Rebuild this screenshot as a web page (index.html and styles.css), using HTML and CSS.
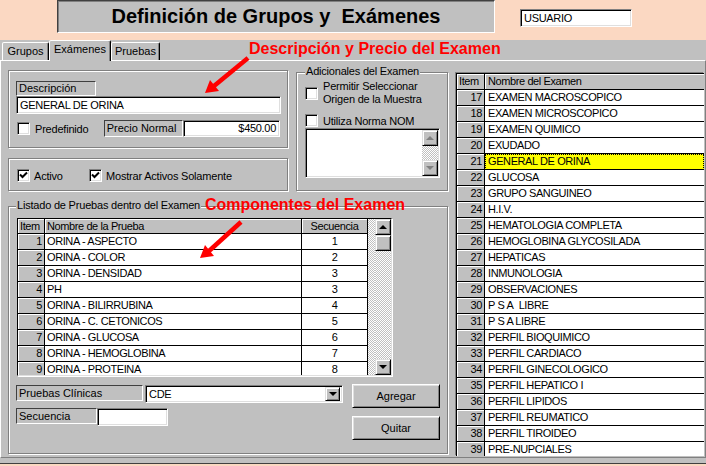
FILE: index.html
```html
<!DOCTYPE html>
<html lang="es">
  <head>
    <meta charset="UTF-8" />
    <meta name="viewport" content="width=device-width, initial-scale=1.0" />
    <title>Definición de Grupos y Exámenes</title>
    <link rel="stylesheet" href="styles.css">
  </head>
  <body>
    <div class="screen">
      <div class="top">
        <div class="title">Definición de Grupos y&nbsp; Exámenes</div>
        <div class="field user">USUARIO</div>
      </div>

      <div class="window">
        <div class="tabs">
          <div class="tab tab-grupos">Grupos</div>
          <div class="tab tab-examenes active">Exámenes</div>
          <div class="tab tab-pruebas">Pruebas</div>
        </div>

        <div class="page">
          <div class="left">
            <div class="upper">
              <div class="col">
                <!-- Descripcion y precio -->
                <div class="group g-desc">
                  <div class="lbl lbl-desc">Descripción</div>
                  <div class="field desc-input">GENERAL DE ORINA</div>
                  <div class="price-row">
                    <div class="chk chk-pred"><span class="box"></span>Predefinido</div>
                    <div class="lbl lbl-precio">Precio Normal</div>
                    <div class="field precio">$450.00</div>
                  </div>
                </div>

                <div class="group g-activo">
                  <div class="chk chk-activo">
                    <span class="box"><svg width="9" height="9" viewBox="0 0 9 9"><polyline points="1,3.5 3.5,6 8,1.5" fill="none" stroke="#000" stroke-width="2"/></svg></span>Activo
                  </div>
                  <div class="chk">
                    <span class="box"><svg width="9" height="9" viewBox="0 0 9 9"><polyline points="1,3.5 3.5,6 8,1.5" fill="none" stroke="#000" stroke-width="2"/></svg></span>Mostrar Activos Solamente
                  </div>
                </div>
              </div>

              <!-- Adicionales -->
              <div class="group g-adic">
                <span class="legend">Adicionales del Examen</span>
                <div class="chk chk-origen"><span class="box"></span><span>Permitir Seleccionar<br>Origen de la Muestra</span></div>
                <div class="chk chk-nom"><span class="box"></span>Utiliza Norma NOM</div>
                <div class="field memo">
                  <div class="vscroll disabled">
                    <div class="sb-btn up"></div>
                    <div class="sb-track"></div>
                    <div class="sb-btn down"></div>
                  </div>
                </div>
              </div>
            </div>

            <!-- Listado de pruebas -->
            <div class="group g-list">
              <span class="legend">Listado de Pruebas dentro del Examen</span>
              <div class="tgrid">
                <div class="tgrid-body">
                  <div class="trow thead"><div class="c-item">Item</div><div class="c-name">Nombre de la Prueba</div><div class="c-seq">Secuencia</div></div>
                  <div class="trow"><div class="c-item num">1</div><div class="c-name">ORINA - ASPECTO</div><div class="c-seq">1</div></div>
                  <div class="trow"><div class="c-item num">2</div><div class="c-name">ORINA - COLOR</div><div class="c-seq">2</div></div>
                  <div class="trow"><div class="c-item num">3</div><div class="c-name">ORINA - DENSIDAD</div><div class="c-seq">3</div></div>
                  <div class="trow"><div class="c-item num">4</div><div class="c-name">PH</div><div class="c-seq">3</div></div>
                  <div class="trow"><div class="c-item num">5</div><div class="c-name">ORINA - BILIRRUBINA</div><div class="c-seq">4</div></div>
                  <div class="trow"><div class="c-item num">6</div><div class="c-name">ORINA - C. CETONICOS</div><div class="c-seq">5</div></div>
                  <div class="trow"><div class="c-item num">7</div><div class="c-name">ORINA - GLUCOSA</div><div class="c-seq">6</div></div>
                  <div class="trow"><div class="c-item num">8</div><div class="c-name">ORINA - HEMOGLOBINA</div><div class="c-seq">7</div></div>
                  <div class="trow"><div class="c-item num">9</div><div class="c-name">ORINA - PROTEINA</div><div class="c-seq">8</div></div>
                </div>
                <div class="vscroll">
                  <div class="sb-btn up"></div>
                  <div class="sb-btn thumb"></div>
                  <div class="sb-track"></div>
                  <div class="sb-btn down"></div>
                </div>
              </div>

              <div class="controls">
                <div class="ctl-left">
                  <div class="ctl-row">
                    <div class="lbl lbl-pruebas">Pruebas Clínicas</div>
                    <div class="field combo">CDE<span class="sb-btn down combo-btn"></span></div>
                  </div>
                  <div class="ctl-row ctl-row2">
                    <div class="lbl lbl-sec">Secuencia</div>
                    <div class="field sec-input"></div>
                  </div>
                </div>
                <div class="ctl-right">
                  <div class="btn">Agregar</div>
                  <div class="btn">Quitar</div>
                </div>
              </div>
            </div>
          </div>

          <!-- Lista de examenes -->
          <div class="rgrid">
            <div class="rrow thead"><div class="r-item">Item</div><div class="r-name">Nombre del Examen</div></div>
            <div class="rrow"><div class="r-item num">17</div><div class="r-name">EXAMEN MACROSCOPICO</div></div>
            <div class="rrow"><div class="r-item num">18</div><div class="r-name">EXAMEN MICROSCOPICO</div></div>
            <div class="rrow"><div class="r-item num">19</div><div class="r-name">EXAMEN QUIMICO</div></div>
            <div class="rrow"><div class="r-item num">20</div><div class="r-name">EXUDADO</div></div>
            <div class="rrow selected"><div class="r-item num">21</div><div class="r-name">GENERAL DE ORINA</div></div>
            <div class="rrow"><div class="r-item num">22</div><div class="r-name">GLUCOSA</div></div>
            <div class="rrow"><div class="r-item num">23</div><div class="r-name">GRUPO SANGUINEO</div></div>
            <div class="rrow"><div class="r-item num">24</div><div class="r-name">H.I.V.</div></div>
            <div class="rrow"><div class="r-item num">25</div><div class="r-name">HEMATOLOGIA COMPLETA</div></div>
            <div class="rrow"><div class="r-item num">26</div><div class="r-name">HEMOGLOBINA GLYCOSILADA</div></div>
            <div class="rrow"><div class="r-item num">27</div><div class="r-name">HEPATICAS</div></div>
            <div class="rrow"><div class="r-item num">28</div><div class="r-name">INMUNOLOGIA</div></div>
            <div class="rrow"><div class="r-item num">29</div><div class="r-name">OBSERVACIONES</div></div>
            <div class="rrow"><div class="r-item num">30</div><div class="r-name">P S A&nbsp; LIBRE</div></div>
            <div class="rrow"><div class="r-item num">31</div><div class="r-name">P S A LIBRE</div></div>
            <div class="rrow"><div class="r-item num">32</div><div class="r-name">PERFIL BIOQUIMICO</div></div>
            <div class="rrow"><div class="r-item num">33</div><div class="r-name">PERFIL CARDIACO</div></div>
            <div class="rrow"><div class="r-item num">34</div><div class="r-name">PERFIL GINECOLOGICO</div></div>
            <div class="rrow"><div class="r-item num">35</div><div class="r-name">PERFIL HEPATICO I</div></div>
            <div class="rrow"><div class="r-item num">36</div><div class="r-name">PERFIL LIPIDOS</div></div>
            <div class="rrow"><div class="r-item num">37</div><div class="r-name">PERFIL REUMATICO</div></div>
            <div class="rrow"><div class="r-item num">38</div><div class="r-name">PERFIL TIROIDEO</div></div>
            <div class="rrow"><div class="r-item num">39</div><div class="r-name">PRE-NUPCIALES</div></div>
          </div>
        </div>
      </div>

      <!-- Anotaciones -->
      <div class="note note-desc">Descripción y Precio del Examen</div>
      <div class="note note-comp">Componentes del Examen</div>
      <svg class="arrows" width="706" height="466" viewBox="0 0 706 466">
        <line x1="248" y1="58" x2="214" y2="86" stroke="#f00" stroke-width="4.5" />
        <polygon points="205,93 219,91 210,80" fill="#f00" />
        <line x1="241" y1="222" x2="209" y2="251" stroke="#f00" stroke-width="4.5" />
        <polygon points="200,258 214,256 205,245" fill="#f00" />
      </svg>
    </div>
  </body>
</html>
```

FILE: styles.css
```css
body {
  margin: 0;
  font-family: "Liberation Sans", Arial, sans-serif;
  font-size: 11px;
  color: #000;
}

.screen {
  position: relative;
  width: 706px;
  height: 466px;
  overflow: hidden;
  background-color: #fbd8c2;
}

/* Header */
.top {
  display: flex;
  align-items: flex-start;
  height: 40px;
}

.title {
  box-sizing: border-box;
  width: 438px;
  height: 33px;
  margin-left: 57px;
  background-color: #c0c0c0;
  border: 1px solid;
  border-color: #404040 #fff #fff #404040;
  box-shadow: inset 1px 1px #808080;
  font-size: 20px;
  font-weight: bold;
  line-height: 30px;
  text-align: center;
}

.field {
  box-sizing: border-box;
  background-color: #fff;
  border: 1px solid;
  border-color: #808080 #fff #fff #808080;
  box-shadow: inset 1px 1px #000, inset -1px -1px #dfdfdf;
  white-space: nowrap;
  overflow: hidden;
}

.user {
  width: 112px;
  height: 18px;
  margin: 9px 0 0 25px;
  padding: 0 3px;
  line-height: 16px;
  letter-spacing: -0.3px;
}

/* Window and tabs */
.window {
  height: 423px;
  background-color: #c0c0c0;
  border-bottom: 1px solid #404040;
}

.tabs {
  display: flex;
  align-items: flex-end;
  height: 20px;
  padding-left: 2px;
}

.tab {
  box-sizing: border-box;
  height: 18px;
  padding-top: 2px;
  text-align: center;
  background-color: #c0c0c0;
  border: 1px solid;
  border-bottom: none;
  border-color: #fff #000 transparent #fff;
  border-radius: 2px 2px 0 0;
  box-shadow: inset -1px 0 #808080;
}

.tab-grupos { width: 47px; }
.tab-examenes { width: 62px; }
.tab-pruebas { width: 49px; }

.tab.active {
  position: relative;
  z-index: 1;
  height: 21px;
  margin-bottom: -1px;
}

.page {
  box-sizing: border-box;
  display: flex;
  align-items: flex-start;
  height: 398px;
  border: 1px solid;
  border-color: #fff #808080 #808080 #fff;
}

.left {
  width: 440px;
  margin: 9px 0 0 7px;
}

.upper {
  display: flex;
  align-items: flex-start;
}

.col {
  display: flex;
  flex-direction: column;
  gap: 10px;
  width: 280px;
}

/* Group boxes */
.group {
  position: relative;
  box-sizing: border-box;
  border: 1px solid #808080;
  box-shadow: inset 1px 1px #fff, 1px 1px #fff;
}

.legend {
  position: absolute;
  top: -8px;
  left: 8px;
  padding: 0 1px;
  line-height: 13px;
  letter-spacing: -0.2px;
  background-color: #c0c0c0;
  white-space: nowrap;
}

.g-list .legend {
  left: 7px;
}

.g-desc {
  height: 78px;
  padding: 10px 7px 0;
}

.lbl {
  box-sizing: border-box;
  height: 15px;
  padding: 0 2px;
  border: 1px solid;
  border-color: #404040 #fff #fff #404040;
  line-height: 13px;
  white-space: nowrap;
}

.lbl-desc { width: 80px; }

.desc-input {
  width: 265px;
  height: 18px;
  padding: 0 3px;
  line-height: 16px;
  letter-spacing: -0.3px;
}

.price-row {
  display: flex;
  align-items: center;
  height: 17px;
  margin-top: 6px;
}

.chk {
  display: flex;
  align-items: center;
  white-space: nowrap;
  letter-spacing: -0.2px;
}

.box {
  box-sizing: border-box;
  display: flex;
  align-items: center;
  justify-content: center;
  flex: none;
  width: 13px;
  height: 13px;
  margin-right: 5px;
  background-color: #fff;
  border: 1px solid;
  border-color: #808080 #fff #fff #808080;
  box-shadow: inset 1px 1px #000, inset -1px -1px #dfdfdf;
}

.chk-pred {
  width: 87px;
  padding-left: 1px;
}

.lbl-precio {
  width: 80px;
  height: 17px;
  line-height: 15px;
}

.precio {
  width: 97px;
  height: 17px;
  padding: 0 3px;
  line-height: 15px;
  text-align: right;
  letter-spacing: -0.3px;
}

.g-activo {
  display: flex;
  align-items: flex-start;
  height: 33px;
  padding: 10px 0 0 8px;
}

.g-activo .chk {
  height: 13px;
}

.g-activo .box {
  margin-right: 4px;
}

.chk-activo {
  width: 72px;
}

.g-adic {
  width: 152px;
  height: 119px;
  margin: 2px 0 0 8px;
  padding: 7px 0 0 8px;
}

.chk-origen {
  line-height: 13px;
}

.chk-nom {
  height: 13px;
  margin-top: 8px;
}

.memo {
  display: flex;
  justify-content: flex-end;
  width: 135px;
  height: 50px;
  margin-top: 1px;
  padding: 1px;
}

/* Scrollbars */
.vscroll {
  display: flex;
  flex-direction: column;
  flex: none;
  width: 16px;
}

.sb-track {
  flex: 1;
  background-image: repeating-conic-gradient(#c0c0c0 0 25%, #fff 0 50%);
  background-size: 2px 2px;
}

.sb-btn {
  box-sizing: border-box;
  display: flex;
  align-items: center;
  justify-content: center;
  flex: none;
  width: 16px;
  height: 16px;
  background-color: #c0c0c0;
  border: 1px solid;
  border-color: #dfdfdf #000 #000 #dfdfdf;
  box-shadow: inset 1px 1px #fff, inset -1px -1px #808080;
}

.sb-btn.up::before,
.sb-btn.down::before {
  content: "";
  width: 0;
  height: 0;
  border-left: 4px solid transparent;
  border-right: 4px solid transparent;
}

.sb-btn.up::before {
  border-bottom: 4px solid #000;
}

.sb-btn.down::before {
  border-top: 4px solid #000;
}

.disabled .sb-btn.up::before {
  border-bottom-color: #808080;
}

.disabled .sb-btn.down::before {
  border-top-color: #808080;
}

/* Listado de pruebas */
.g-list {
  height: 248px;
  margin-top: 15px;
  padding: 11px 0 0 8px;
}

.tgrid {
  box-sizing: border-box;
  display: flex;
  width: 375px;
  height: 158px;
  overflow: hidden;
  border: 1px solid;
  border-color: #000 #dfdfdf #dfdfdf #000;
  box-shadow: 1px 1px #fff;
}

.tgrid-body {
  flex: 1;
  overflow: hidden;
  background-image: repeating-conic-gradient(#c0c0c0 0 25%, #fff 0 50%);
  background-size: 2px 2px;
}

.trow {
  display: grid;
  grid-template-columns: 27px 257px 66px;
  height: 16px;
  letter-spacing: -0.4px;
}

.trow.thead {
  height: 15px;
}

.trow > div,
.rrow > div {
  box-sizing: border-box;
  padding: 0 2px;
  overflow: hidden;
  white-space: nowrap;
  line-height: 15px;
  background-color: #fff;
  border-right: 1px solid #000;
  border-bottom: 1px solid #000;
}

.thead > div,
.trow > .c-item,
.rrow > .r-item {
  background-color: #c0c0c0;
  box-shadow: inset 1px 1px #fff;
}

.trow.thead > div {
  line-height: 14px;
}

.c-seq {
  text-align: center;
}

.num {
  text-align: right;
}

.controls {
  display: flex;
  margin-top: 8px;
}

.ctl-left {
  width: 327px;
  margin-left: -1px;
  padding-top: 1px;
}

.ctl-row {
  display: flex;
  align-items: flex-start;
}

.ctl-row2 {
  margin-top: 5px;
}

.lbl-pruebas {
  width: 127px;
  height: 16px;
  line-height: 14px;
}

.combo {
  display: flex;
  align-items: center;
  justify-content: space-between;
  width: 198px;
  height: 18px;
  margin-left: 2px;
  padding: 0 2px 0 3px;
  letter-spacing: -0.3px;
}

.combo-btn {
  width: 15px;
  height: 14px;
}

.lbl-sec {
  width: 81px;
  height: 16px;
  line-height: 14px;
}

.sec-input {
  width: 71px;
  height: 18px;
}

.ctl-right {
  display: flex;
  flex-direction: column;
  gap: 8px;
  margin-left: 9px;
}

.btn {
  box-sizing: border-box;
  width: 88px;
  height: 24px;
  line-height: 22px;
  text-align: center;
  background-color: #c0c0c0;
  border: 1px solid;
  border-color: #fff #000 #000 #fff;
  box-shadow: inset 1px 1px #dfdfdf, inset -1px -1px #808080;
}

/* Lista de examenes */
.rgrid {
  box-sizing: border-box;
  width: 248px;
  height: 383px;
  margin: 12px 0 0 8px;
  overflow: hidden;
  background-color: #fff;
  border-top: 1px solid #000;
  border-left: 1px solid #000;
  box-shadow: -1px -1px #808080;
}

.rrow {
  display: grid;
  grid-template-columns: 28px 1fr;
  height: 16px;
  letter-spacing: -0.4px;
}

.rrow > .r-name {
  border-right: none;
  padding-left: 3px;
}

.rrow.selected > .r-name {
  background-color: #ffff00;
  outline: 1px dotted #000;
  outline-offset: -1px;
}

/* Anotaciones */
.note {
  position: absolute;
  color: #f00;
  font-size: 16px;
  font-weight: bold;
  line-height: 18px;
  white-space: nowrap;
}

.note-desc {
  top: 40px;
  left: 249px;
}

.note-comp {
  top: 196px;
  left: 205px;
}

.arrows {
  position: absolute;
  top: 0;
  left: 0;
  pointer-events: none;
}
```
